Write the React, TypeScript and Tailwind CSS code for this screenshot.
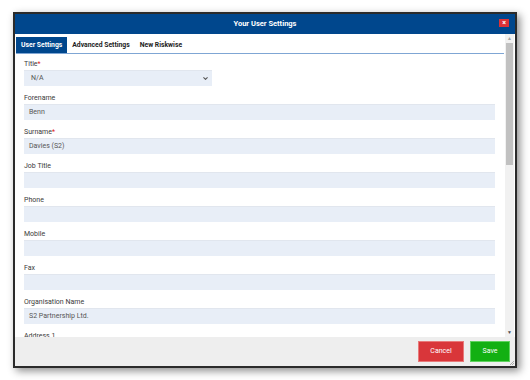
import { ChevronDown } from 'lucide-react';

const fields = [
  { label: 'Forename', value: 'Benn' },
  { label: 'Surname', value: 'Davies (S2)', required: true },
  { label: 'Job Title', value: '' },
  { label: 'Phone', value: '' },
  { label: 'Mobile', value: '' },
  { label: 'Fax', value: '' },
  { label: 'Organisation Name', value: 'S2 Partnership Ltd.' },
  { label: 'Address 1', value: '' },
];

function Field({ label, value, required }: { label: string; value: string; required?: boolean }) {
  return (
    <div className="mb-[6px]">
      <div className="h-[12px] leading-[12px] text-[7px] text-[#3a3a3a]">
        {label}
        {required && <span className="text-[#e02020]">*</span>}
      </div>
      <div className="h-[16px] bg-[#e8eef7] border-t border-[#e1e6ee] pl-[5px] text-[7px] leading-[15px] text-[#555]">
        {value}
      </div>
    </div>
  );
}

export default function App() {
  return (
    <div className="w-[530px] h-[380px] bg-white pt-[12px] pl-[13px] font-['Roboto',sans-serif] overflow-hidden">
      <div className="w-[504px] h-[356px] border-2 border-[#2b2b2b] bg-white flex flex-col shadow-[3px_3px_8px_rgba(0,0,0,0.45)] relative">
        {/* header */}
        <div className="h-[20px] bg-[#00478d] flex items-center justify-center relative shrink-0">
          <span className="text-white font-bold text-[7.5px]">Your User Settings</span>
          <div className="absolute right-[6px] top-[5px] w-[10px] h-[8px] bg-[#dc3237] flex items-center justify-center text-white text-[7px] font-bold leading-none">
            ×
          </div>
        </div>

        {/* body */}
        <div className="flex flex-1 min-h-0">
          <div className="flex-1 min-w-0 overflow-hidden">
            <div className="flex mt-[3px] ml-[1px] mr-[1px] border-b border-[#7fa6d4] h-[17px]">
              <div className="px-[5px] bg-[#00478d] text-white font-bold text-[6.8px] leading-[16px]">User Settings</div>
              <div className="px-[5px] text-[#222] font-bold text-[6.8px] leading-[16px]">Advanced Settings</div>
              <div className="px-[5px] text-[#222] font-bold text-[6.8px] leading-[16px]">New Riskwise</div>
            </div>

            <div className="pt-[4px] pl-[9px] pr-[10px]">
              <div className="mb-[6px]">
                <div className="h-[12px] leading-[12px] text-[7px] text-[#3a3a3a]">
                  Title<span className="text-[#e02020]">*</span>
                </div>
                <div className="w-[188px] h-[16px] bg-[#e8eef7] border-t border-[#e1e6ee] pl-[7px] pr-[3px] flex items-center justify-between text-[7px] text-[#555]">
                  <span>N/A</span>
                  <ChevronDown size={7} strokeWidth={3.5} className="text-[#555]" />
                </div>
              </div>
              {fields.map((f) => (
                <Field key={f.label} label={f.label} value={f.value} required={f.required} />
              ))}
            </div>
          </div>

          {/* scrollbar */}
          <div className="w-[9px] bg-[#f1f1f1] flex flex-col items-center shrink-0 mr-[1px]">
            <div className="h-[9px] flex items-center justify-center text-[#a3a3a3] text-[5px] leading-none">▲</div>
            <div className="w-[7px] h-[122px] bg-[#c1c1c1]" />
            <div className="flex-1" />
            <div className="h-[9px] flex items-center justify-center text-[#505050] text-[5px] leading-none">▼</div>
          </div>
        </div>

        {/* footer */}
        <div className="h-[29px] bg-[#eeeeee] flex items-center justify-end gap-[6px] pr-[5px] shrink-0">
          <div className="w-[46px] h-[21px] bg-[#d9363a] border border-[#e87a7a] flex items-center justify-center text-white text-[7px]">
            Cancel
          </div>
          <div className="w-[40px] h-[21px] bg-[#12b012] border border-[#5fd35f] flex items-center justify-center text-white text-[7px]">
            Save
          </div>
        </div>

        {/* resize grip */}
        <svg className="absolute right-[1px] bottom-[1px]" width="5" height="5" viewBox="0 0 5 5">
          <path d="M1 5 L5 1 M3 5 L5 3" stroke="#9a9a9a" strokeWidth="0.8" />
        </svg>
      </div>
    </div>
  );
}
